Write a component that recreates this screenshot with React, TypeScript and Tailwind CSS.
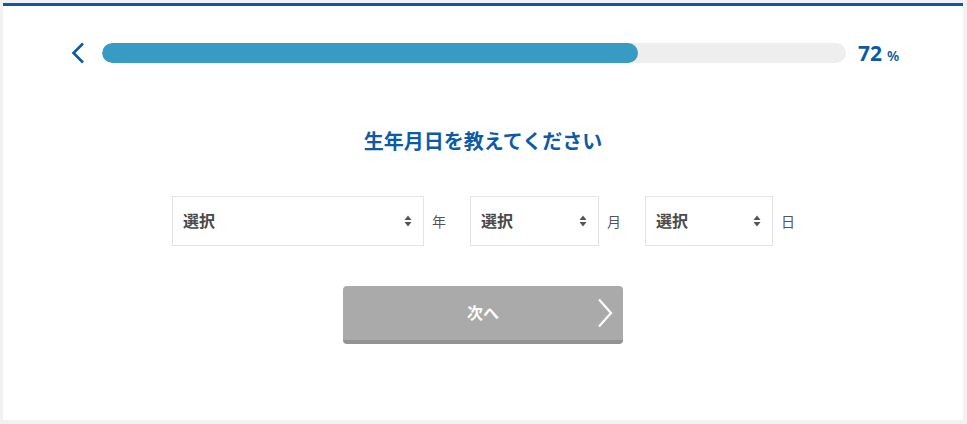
const FONT = { fontFamily: '"Noto Sans", "Noto Sans CJK JP", sans-serif' }

function SortArrows() {
  return (
    <svg width="8" height="12" viewBox="0 0 8 12" className="shrink-0">
      <path d="M4 0.5 L7.5 5 L0.5 5 Z" fill="#555" />
      <path d="M4 11.5 L7.5 7 L0.5 7 Z" fill="#555" />
    </svg>
  )
}

function DateSelect({ width, unit }: { width: string; unit: string }) {
  return (
    <div className="flex items-center">
      <div className={`${width} h-[50px] border border-[#e3e3e3] bg-white flex items-center justify-between pl-[10px] pr-[11px]`}>
        <span className="text-[16px] font-bold text-[#4a4a4a]">選択</span>
        <SortArrows />
      </div>
      <span className="ml-[8px] mr-[24px] text-[14px] text-[#555] w-[14px]">{unit}</span>
    </div>
  )
}

export default function App() {
  const progress = 72

  return (
    <div className="w-[967px] h-[424px] bg-[#f2f2f2] pt-[3px] overflow-hidden" style={FONT}>
      <div className="ml-[3px] w-[960px] h-[417px] bg-white border-t-[3px] border-[#0a5aa6]">
        {/* Progress */}
        <div className="flex items-center pl-[67px] pt-[36px]">
          <svg width="16" height="22" viewBox="0 0 16 22" className="shrink-0">
            <path d="M13 1.5 L3.5 11 L13 20.5" fill="none" stroke="#0a5aa6" strokeWidth="2.6" />
          </svg>
          <div className="ml-[16px] w-[744px] h-[20px] rounded-full bg-[#eeeeee] overflow-hidden">
            <div className="h-full rounded-full bg-[#379bc4]" style={{ width: `${progress}%` }} />
          </div>
          <div className="ml-[12px] flex items-baseline text-[#0a5aa6]">
            <span className="text-[21px] font-bold leading-none">{progress}</span>
            <span className="ml-[5px] text-[14px] font-semibold leading-none">%</span>
          </div>
        </div>

        {/* Question */}
        <h2 className="mt-[63px] text-center text-[20px] font-bold text-[#0d5aa7]">
          生年月日を教えてください
        </h2>

        {/* Date selects */}
        <div className="mt-[39px] flex justify-center pl-[25px]">
          <DateSelect width="w-[252px]" unit="年" />
          <DateSelect width="w-[129px]" unit="月" />
          <DateSelect width="w-[128px]" unit="日" />
        </div>

        {/* Next button */}
        <div className="mt-[40px] flex justify-center">
          <button className="relative w-[280px] h-[58px] rounded-[4px] bg-[#aaaaaa] border-b-[4px] border-[#939393] text-white text-[16px] font-bold flex items-center justify-center">
            次へ
            <svg width="16" height="30" viewBox="0 0 16 30" className="absolute right-[10px] top-[12px]">
              <path d="M2 1.5 L14 15 L2 28.5" fill="none" stroke="white" strokeWidth="2.2" />
            </svg>
          </button>
        </div>
      </div>
    </div>
  )
}
